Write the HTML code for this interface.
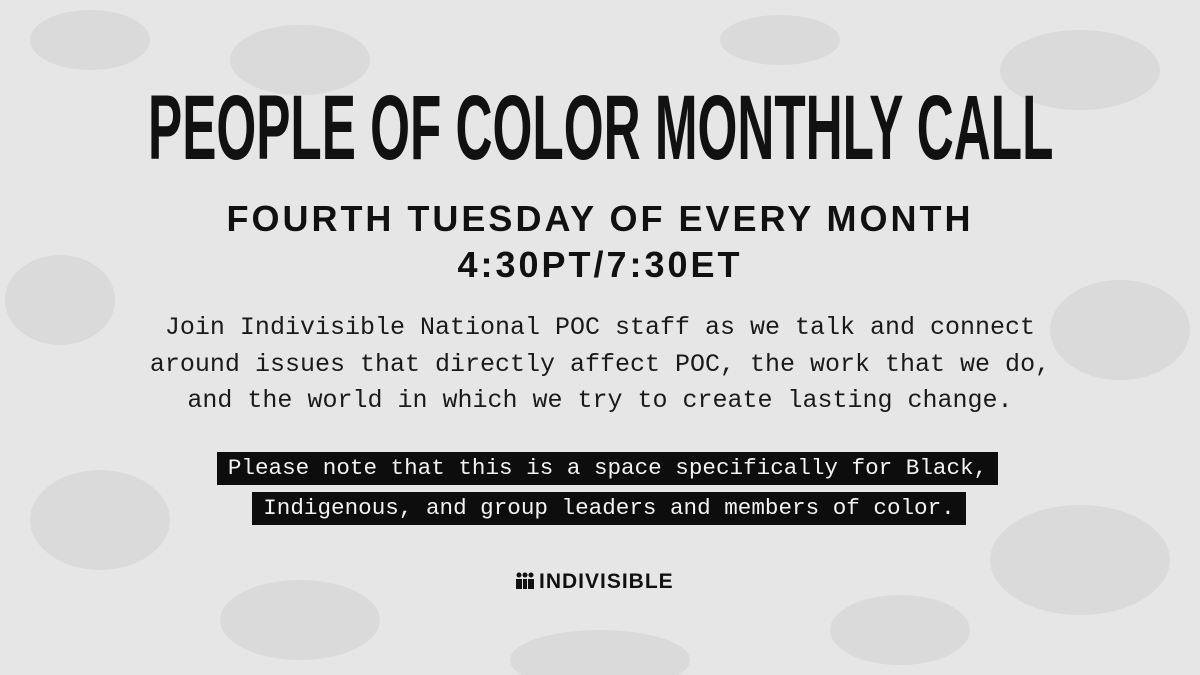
<!DOCTYPE html>
<html><head><meta charset="utf-8"><style>
html,body{margin:0;padding:0}
body{width:1200px;height:675px;background:#e6e6e6;position:relative;overflow:hidden;font-family:"Liberation Sans",sans-serif;color:#111}
.t{position:absolute;left:0;width:1200px;text-align:center;white-space:nowrap}
.title{top:78px;font-weight:bold;font-size:92px;line-height:100px;}
.title span{display:inline-block;transform:translateX(-12px) scaleX(0.557);transform-origin:center}
.wrap{position:absolute;left:-200px;width:1600px;text-align:center;white-space:nowrap}
.sub{font-size:36px;font-weight:bold;letter-spacing:3px;line-height:40px}
.body{top:310px;font-family:"Liberation Mono",monospace;font-size:25px;line-height:36.5px;color:#1a1a1a}
.bx{position:absolute;background:#0d0d0d;color:#f2f2f2;font-family:"Liberation Mono",monospace;font-size:22.6px;line-height:33px;text-align:center;white-space:nowrap}
.logo{position:absolute;left:515px;top:570px;font-weight:bold;font-size:21px;letter-spacing:1px;color:#111}
</style></head><body>
<svg width="1200" height="675" style="position:absolute;left:0;top:0" fill="#dadada">
<ellipse cx="90" cy="40" rx="60" ry="30"/><ellipse cx="300" cy="60" rx="70" ry="35"/><ellipse cx="1080" cy="70" rx="80" ry="40"/>
<ellipse cx="60" cy="300" rx="55" ry="45"/><ellipse cx="1120" cy="330" rx="70" ry="50"/><ellipse cx="100" cy="520" rx="70" ry="50"/>
<ellipse cx="1080" cy="560" rx="90" ry="55"/><ellipse cx="300" cy="620" rx="80" ry="40"/><ellipse cx="900" cy="630" rx="70" ry="35"/>
<ellipse cx="600" cy="660" rx="90" ry="30"/><ellipse cx="780" cy="40" rx="60" ry="25"/>
</svg>
<div class="wrap title"><span>PEOPLE OF COLOR MONTHLY CALL</span></div>
<div class="t sub" style="top:199px">FOURTH TUESDAY OF EVERY MONTH</div>
<div class="t sub" style="top:245px">4:30PT/7:30ET</div>
<div class="t body">Join Indivisible National POC staff as we talk and connect<br>around issues that directly affect POC, the work that we do,<br>and the world in which we try to create lasting change.</div>
<div class="bx" style="left:217px;top:452px;width:781px;height:33px">Please note that this is a space specifically for Black,</div>
<div class="bx" style="left:252px;top:492px;width:714px;height:33px">Indigenous, and group leaders and members of color.</div>
<div class="logo"><svg width="20" height="18" style="vertical-align:-2px;margin-right:4px" fill="#111"><circle cx="4" cy="3" r="2.5"/><circle cx="10" cy="3" r="2.5"/><circle cx="16" cy="3" r="2.5"/><rect x="1" y="7" width="6" height="10"/><rect x="8" y="7" width="4" height="10"/><rect x="13" y="7" width="6" height="10"/></svg>INDIVISIBLE</div>
</body></html>
